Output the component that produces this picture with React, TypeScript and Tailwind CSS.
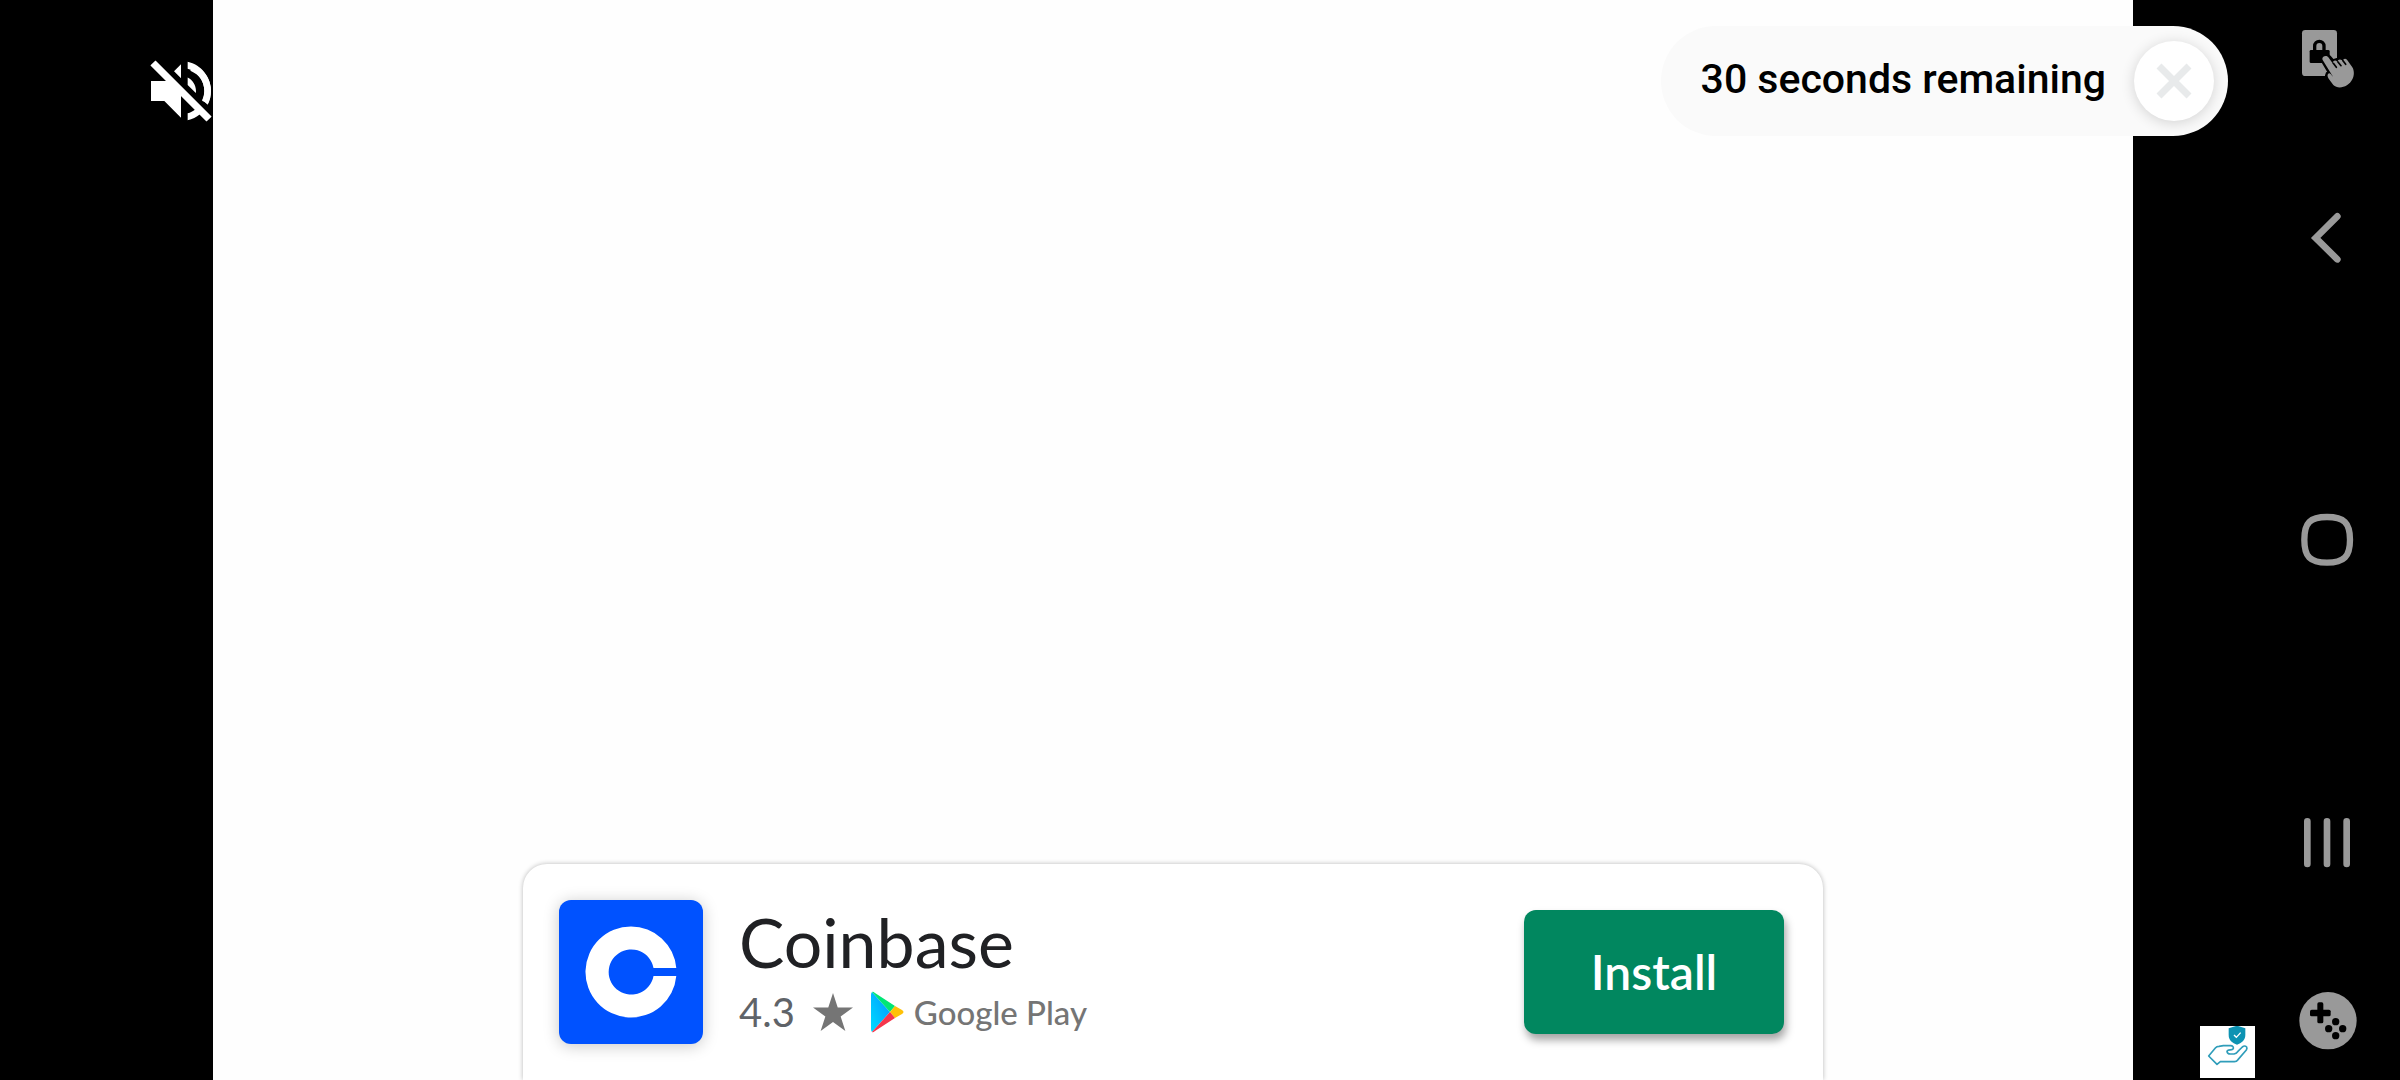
import type { ReactNode } from "react";

function NavButton({ label, viewBox, children }: { label: string; viewBox: string; children: ReactNode }) {
  return (
    <button type="button" aria-label={label} className="size-[60px] text-[#999999]">
      <svg viewBox={viewBox} className="size-full" fill="currentColor">
        {children}
      </svg>
    </button>
  );
}

function SystemNav() {
  return (
    <nav aria-label="System" className="flex w-36 shrink-0 flex-col items-center justify-between bg-black py-[29px]">
      <div className="flex flex-col gap-[119px]">
        <NavButton label="Touch lock" viewBox="54 57 180 180">
          <rect x="66" y="60" width="105" height="138" rx="10" />
          <g fill="#000" stroke="#000">
            <path d="M104 122V108a14 14 0 0 1 28 0v14" fill="none" strokeWidth="10" />
            <rect x="89" y="120" width="60" height="39" rx="4" stroke="none" />
            <path
              d="M129 150C123 140 139 132 146 142L158 156L196 144L217 172C224 182 222 200 217 208C206 232 174 239 160 225L146 206C141 199 141 192 148 189L156 196Z"
              strokeWidth="15"
              strokeLinejoin="round"
            />
          </g>
          <path d="M128 150C123 141 138 133 145 142L160 163C155 154 165 147 172 155L175 159C169 151 179 144 186 151L190 156C186 148 195 142 201 149L217 172C224 182 222 200 217 208C206 232 174 239 160 225L146 206C140 198 143 191 148 190C152 190 155 197 159 200Z" />
          <path d="M160 160L169 172M174 156L183 167M189 152L197 163" fill="none" stroke="#000" strokeWidth="5" strokeLinecap="round" />
        </NavButton>
        <NavButton label="Back" viewBox="54 54 180 180">
          <path d="M172 79L107 144L172 208" fill="none" stroke="currentColor" strokeWidth="20" strokeLinecap="round" />
        </NavButton>
      </div>
      <NavButton label="Home" viewBox="54 60 180 180">
        <path
          d="M141 81C192 81 210 98 210 149S192 218 141 218S73 200 73 149S90 81 141 81Z"
          fill="none"
          stroke="currentColor"
          strokeWidth="19"
        />
      </NavButton>
      <div className="flex flex-col gap-[119px]">
        <NavButton label="Recent apps" viewBox="54 67 180 180">
          <path d="M82 95V223M141 95V223M200 95V223" fill="none" stroke="currentColor" strokeWidth="20" strokeLinecap="round" />
        </NavButton>
        <NavButton label="Game tools" viewBox="354 33 180 180">
          <circle cx="444" cy="122" r="86" />
          <g fill="#000">
            <rect x="390" y="89" width="62" height="20" rx="5" />
            <rect x="412" y="67" width="18" height="63" rx="5" />
            <circle cx="467" cy="125" r="11" />
            <circle cx="446" cy="146" r="11" />
            <circle cx="488" cy="146" r="11" />
            <circle cx="467" cy="167" r="11" />
          </g>
        </NavButton>
      </div>
    </nav>
  );
}

function RewardTimer() {
  return (
    <div className="absolute top-[26px] right-7 flex h-[110px] items-center gap-7 rounded-full bg-[#fafafa] pr-3.5 pl-10">
      <p className="pb-1 font-[Roboto,sans-serif] text-[41px] leading-[48px] font-medium whitespace-nowrap text-black">
        30 seconds remaining
      </p>
      <button
        type="button"
        aria-label="Close"
        className="flex size-20 items-center justify-center rounded-full bg-white shadow-[0_2px_14px_rgba(0,0,0,0.16)]"
      >
        <svg viewBox="0 0 36 36" className="size-9" stroke="#e8eaeb" strokeWidth="7">
          <path d="M3 3L33 33M33 3L3 33" />
        </svg>
      </button>
    </div>
  );
}

function CoinbaseLogo() {
  return (
    <svg
      viewBox="0 0 144 144"
      role="img"
      aria-label="Coinbase logo"
      className="size-36 shrink-0 rounded-xl bg-[#0052ff] shadow-[0_2px_16px_rgba(0,0,0,0.22)]"
    >
      <path
        d="M72 26.5A45.5 45.5 0 1 0 117.300 76H94.500A22.600 22.600 0 1 1 94.500 68H117.300A45.500 45.500 0 0 0 72 26.500Z"
        fill="#fff"
      />
    </svg>
  );
}

function PlayLogo() {
  return (
    <svg viewBox="0 0 33 42" className="ml-[18px] h-[42px] w-[33px]" aria-hidden="true">
      <defs>
        <linearGradient id="play-blue" x1="1" y1="0" x2="0" y2="1">
          <stop offset="0" stopColor="#0096ff" />
          <stop offset="1" stopColor="#00dcff" />
        </linearGradient>
      </defs>
      <path d="M1 1Q0 2 0 4V38Q0 40 1 41L19 21Z" fill="url(#play-blue)" />
      <path d="M1 1Q2 0 4 2L24 15L19 21Z" fill="#00e676" />
      <path d="M24 15L31 19Q34 21 31 23L24 27L19 21Z" fill="#ffc107" />
      <path d="M1 41Q2 42 4 40L24 27L19 21Z" fill="#f5364c" />
    </svg>
  );
}

function InstallCard() {
  return (
    <section className="mx-auto flex w-full max-w-[1300px] items-center rounded-t-3xl bg-white px-9 pt-9 pb-9 shadow-[0_0_5px_rgba(0,0,0,0.28)]">
      <CoinbaseLogo />
      <div className="ml-9 flex flex-1 flex-col gap-3 font-[Lato,sans-serif]">
        <h1 className="text-[68px] leading-[68px] text-[#202124]">Coinbase</h1>
        <div className="flex h-12 items-center">
          <span className="text-[40px] leading-[48px] text-[#5f6368]">4.3</span>
          <svg viewBox="0 0 20 19" className="ml-[18px] h-[38px] w-10 fill-[#757575]" aria-hidden="true">
            <path d="M10 0L12.360 7.250H20L13.820 11.730L16.180 19L10 14.500L3.820 19L6.180 11.730L0 7.250H7.640Z" />
          </svg>
          <PlayLogo />
          <span className="ml-2.5 text-[33px] leading-[48px] font-medium text-[#757575]">Google Play</span>
        </div>
      </div>
      <button
        type="button"
        className="mr-[3px] h-[124px] w-[260px] shrink-0 rounded-xl bg-[#01875f] font-[Lato,sans-serif] text-[48px] leading-[56px] font-semibold text-white shadow-[2px_6px_8px_rgba(0,0,0,0.36)]"
      >
        Install
      </button>
    </section>
  );
}

export default function App() {
  return (
    <div className="flex h-screen overflow-hidden bg-black">
      <main className="relative flex min-w-0 flex-1 pr-[123px]">
        <div className="flex w-[213px] shrink-0 items-start justify-end pt-[51px]">
          <button type="button" aria-label="Unmute" className="-mr-2 size-20 text-white">
            <svg viewBox="0 0 24 24" className="size-full" fill="currentColor">
              <path d="M16.500 12c0-1.770-1.020-3.290-2.500-4.030v2.210l2.450 2.450c.03-.2.050-.41.050-.63zm2.500 0c0 .94-.2 1.820-.54 2.640l1.510 1.510C20.630 14.910 21 13.500 21 12c0-4.280-2.990-7.860-7-8.770v2.060c2.890.86 5 3.540 5 6.710zM4.270 3L3 4.270 7.730 9H3v6h4l5 5v-6.730l4.250 4.250c-.67.52-1.420.93-2.250 1.180v2.060c1.380-.31 2.630-.95 3.690-1.810L19.730 21 21 19.730l-9-9L4.270 3zM12 4L9.910 6.090 12 8.180V4z" />
              <path d="M3.600 3.600L20.400 20.400" stroke="currentColor" strokeWidth="2.200" />
              <path d="M15.200 5C18 6.200 20 8.700 20 12Q20 13.800 19.200 15.400" fill="none" stroke="currentColor" strokeWidth="2" />
            </svg>
          </button>
        </div>
        <div className="flex min-w-0 flex-1 flex-col justify-end bg-[#fefefe]">
          <InstallCard />
        </div>
        <RewardTimer />
        <button type="button" aria-label="Ad privacy" className="absolute right-px bottom-0.5 h-[52px] w-[55px] bg-white">
          <svg viewBox="60 139 165 156" className="size-full">
            <path d="M171 138L196 146V166C196 182 184 190 171 195C157 190 146 182 146 166V146Z" fill="#0d93b3" />
            <path d="M162 166L169 173L182 159" fill="none" stroke="#fff" strokeWidth="4" />
            <path
              d="M86 229L106 205Q110 200 117 200L130 198H152Q161 199 160 206C159 213 142 208 141 215Q142 223 151 223H162Q169 222 173 216L187 202Q194 196 200 202Q202 206 199 211L174 240Q170 246 163 246H121L111 254Z"
              fill="none"
              stroke="#2f9dba"
              strokeWidth="5"
              strokeLinejoin="round"
            />
          </svg>
        </button>
      </main>
      <SystemNav />
    </div>
  );
}
